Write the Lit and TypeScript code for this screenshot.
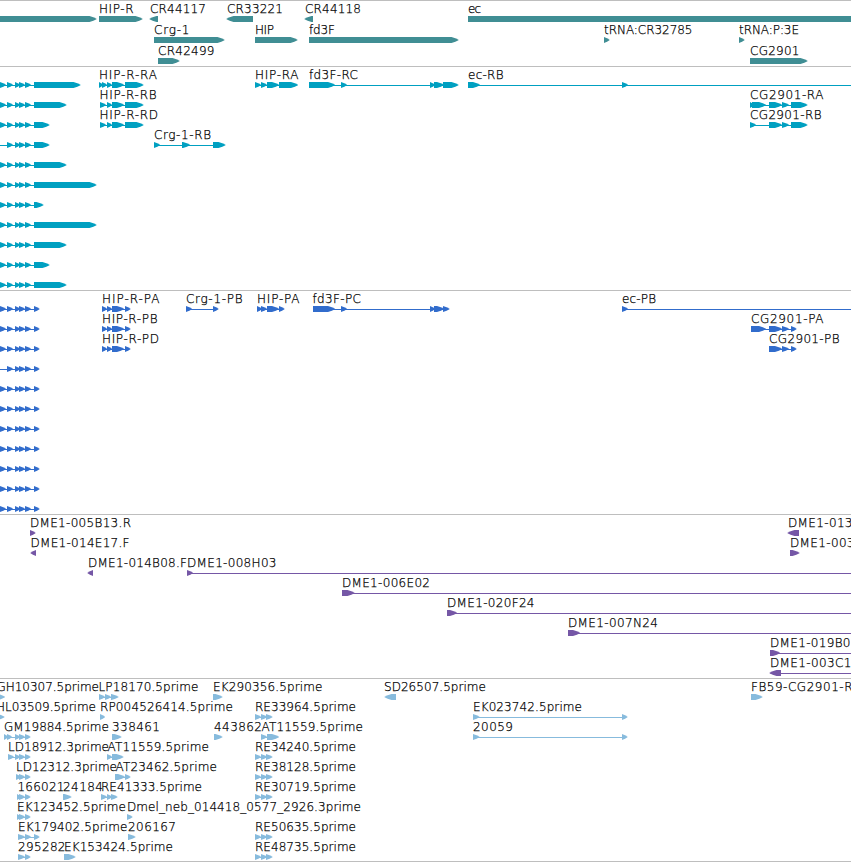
import { LitElement, html, svg, css } from "lit";
import { customElement, property } from "lit/decorators.js";

type Span = [number, number];

interface Feature {
  row: number;
  spans: Span[];
  label?: string;
  x: number;
  width: number;
  reverse: boolean;
}

interface Track {
  name: string;
  height: number;
  pitch: number;
  features: Feature[];
}

/** Far right coordinate for features that run past the visible region. */
const BEYOND = 870;

/** A labelled feature: row, label, label start, label end, spans. */
function f(row: number, label: string, x: number, end: number, spans: Span[], reverse = false): Feature {
  return { row, label, x, width: end - x, spans, reverse };
}

/** A feature whose label lies outside the visible region. */
function bare(row: number, spans: Span[]): Feature {
  return { row, spans, x: 0, width: 0, reverse: false };
}

const exons: Span[] = [[7, 13], [15, 20], [19, 25], [25, 31]];
const upstream = (row: number): Span[] => (row === 3 ? [[-12, -6]] : [[-6, -1], [0, 6]]);

const genes: Feature[] = [
  bare(0, [[-10, 96.5]]),
  f(0, "HIP-R", 99, 133.5, [[99, 142.5]]),
  f(0, "CR44117", 150, 206, [[149.5, 158]], true),
  f(0, "CR33221", 227, 283, [[226.5, 253]], true),
  f(0, "CR44118", 305, 361, [[304.5, 313]], true),
  f(0, "ec", 468, 481, [[468, BEYOND]]),
  f(1, "Crg-1", 154, 189.5, [[154, 224.5]]),
  f(1, "HIP", 255, 274, [[255, 297.5]]),
  f(1, "fd3F", 309, 335, [[309, 458.5]]),
  f(1, "tRNA:CR32785", 604, 692.5, [[604, 609.5]]),
  f(1, "tRNA:P:3E", 739, 799, [[739, 744.5]]),
  f(2, "CR42499", 158, 214.5, [[158, 179.5]]),
  f(2, "CG2901", 750, 799.5, [[750, 807.5]]),
];

const transcripts: Feature[] = [
  ...[80.5, 66.5, 49.5, 49.5, 66.5, 96.5, 43.5, 96.5, 66.5, 49.5, 66.5].map((end, row) =>
    bare(row, [...upstream(row), ...exons, [34, end] as Span])
  ),
  f(0, "HIP-R-RA", 99, 157, [[99, 103], [102, 107], [107, 112], [112, 124], [125, 143.5]]),
  f(1, "HIP-R-RB", 99.5, 156.5, [[100, 106], [107, 112], [112, 124], [125, 143.5]]),
  f(2, "HIP-R-RD", 99.5, 158, [[100, 106], [107, 112], [112, 124], [125, 143.5]]),
  f(3, "Crg-1-RB", 154, 211, [[154, 160], [182, 190], [213, 225.5]]),
  f(0, "HIP-RA", 255, 298.5, [[255, 261], [261, 267], [267, 279], [279, 298]]),
  f(0, "fd3F-RC", 309, 358, [[309, 335], [341, 347], [430, 435], [434, 444], [443, 458.5]]),
  f(0, "ec-RB", 468, 503.5, [[468, 480], [622, 628], [BEYOND, BEYOND + 6]]),
  f(1, "CG2901-RA", 750, 823.5, [[750, 754], [752, 766], [769, 782], [782, 789], [791, 807.5]]),
  f(2, "CG2901-RB", 750, 821.5, [[750, 756], [769, 782], [782, 789], [791, 807.5]]),
];

const proteins: Feature[] = [
  ...Array.from({ length: 11 }, (_, row) => bare(row, [...upstream(row), ...exons, [34, 39.5] as Span])),
  ...["HIP-R-PA", "HIP-R-PB", "HIP-R-PD"].map((name, row) =>
    f(row, name, 102, [159.5, 157.5, 159][row], [[102, 107], [107, 112], [112, 124], [125, 130.5]])
  ),
  f(0, "Crg-1-PB", 186, 242.5, [[186, 192], [213, 218.5]]),
  f(0, "HIP-PA", 257, 299.5, [[257, 262], [261, 267], [267, 279], [279, 284.5]]),
  f(0, "fd3F-PC", 312.5, 361, [[313, 335], [341, 347], [430, 435], [434, 444], [443, 449.5]]),
  f(0, "ec-PB", 622, 656, [[622, 628], [BEYOND, BEYOND + 6]]),
  f(1, "CG2901-PA", 751, 823.5, [[751, 766], [769, 782], [782, 789], [791, 796.5]]),
  f(2, "CG2901-PB", 769, 839.5, [[769, 782], [782, 789], [791, 796.5]]),
];

const clones: Feature[] = [
  f(0, "DME1-005B13.R", 30, 131, [[30, 35.5]]),
  f(1, "DME1-014E17.F", 30.5, 129.5, [[30.5, 36]], true),
  f(2, "DME1-014B08.F", 88, 187, [[87.5, 93]], true),
  f(2, "DME1-008H03", 187, 276.5, [[187, 193], [BEYOND, BEYOND + 6]]),
  f(3, "DME1-006E02", 342, 430, [[342, 354.5], [BEYOND, BEYOND + 6]]),
  f(4, "DME1-020F24", 447, 534.5, [[447, 457], [BEYOND, BEYOND + 6]]),
  f(5, "DME1-007N24", 568, 658, [[568, 580], [BEYOND, BEYOND + 6]]),
  f(0, "DME1-013", 788, 852.5, [[787.5, 799]], true),
  f(1, "DME1-003", 790, 854.5, [[790, 799.5]]),
  f(6, "DME1-019B0", 770, 850.5, [[770, 780], [BEYOND, BEYOND + 6]]),
  f(7, "DME1-003C1", 770, 851.5, [[769.5, 781], [BEYOND, BEYOND + 6]], true),
];

const hipReads: [number, string][] = [
  [1, "RE33964.5prime"],
  [3, "RE34240.5prime"],
  [4, "RE38128.5prime"],
  [5, "RE30719.5prime"],
  [7, "RE50635.5prime"],
  [8, "RE48735.5prime"],
];

const reads: Feature[] = [
  f(0, "GH10307.5prime", -3.5, 99, [[-2, 5]]),
  f(0, "LP18170.5prime", 98.5, 198.5, [[99, 105], [105, 111], [111, 118.5]]),
  f(0, "EK290356.5prime", 213, 322.5, [[213, 222.5]]),
  f(0, "SD26507.5prime", 384, 486, [[384.5, 396]], true),
  f(0, "FB59-CG2901-R", 751, 852.5, [[751, 762.5]]),
  f(1, "HL03509.5prime", -4, 96, [[-2, 4.5]]),
  f(1, "RP004526414.5prime", 100, 233, [[100, 105]]),
  f(1, "EK023742.5prime", 473, 582, [[473, 479.5], [622, 627.5]]),
  f(2, "GM19884.5prime", 4, 109, [[4, 8], [7, 12], [15, 20], [19, 25], [25, 30.5]]),
  f(2, "338461", 112, 160, [[112, 121.5]]),
  f(2, "443862", 214, 262, [[214, 222.5]]),
  f(2, "AT11559.5prime", 261.5, 363, [[261, 267], [267, 279]]),
  f(2, "20059", 473, 513, [[473, 479.5], [622, 627.5]]),
  f(3, "LD18912.3prime", 8, 109, [[8, 14], [15, 20], [19, 25], [25, 30.5]]),
  f(3, "AT11559.5prime", 107.5, 209, [[107, 112], [112, 123.5]]),
  f(4, "LD12312.3prime", 16, 117, [[16, 21], [19, 25], [25, 30.5]]),
  f(4, "AT23462.5prime", 115.5, 217, [[115, 125], [125, 130.5]]),
  f(5, "166021", 17.5, 64.5, [[17, 21], [19, 25], [25, 30.5]]),
  f(5, "24184", 63, 103, [[63, 71.5]]),
  f(5, "RE41333.5prime", 101, 202, [[101, 107], [107, 112], [111, 117.5]]),
  f(6, "EK123452.5prime", 17, 126, [[17, 21], [19, 25], [25, 30.5]]),
  f(6, "Dmel_neb_014418_0577_2926.3prime", 127, 361, [[127, 132.5]]),
  f(7, "EK179402.5prime", 18, 127.5, [[18, 25], [25, 31], [34, 39.5]]),
  f(7, "206167", 128, 176, [[128, 135.5]]),
  f(8, "295282", 18, 65.5, [[18, 25], [25, 30.5]]),
  f(8, "EK153424.5prime", 64, 173, [[64, 75.5]]),
  ...hipReads.map(([row, name]) => f(row, name, 255, 356, [[255, 261], [261, 267], [266, 272.5]])),
];

const tracks: Track[] = [
  { name: "gene", height: 65, pitch: 21, features: genes },
  { name: "transcript", height: 223, pitch: 20, features: transcripts },
  { name: "protein", height: 223, pitch: 20, features: proteins },
  { name: "clone", height: 163, pitch: 20, features: clones },
  { name: "read", height: 182, pitch: 20, features: reads },
];

@customElement("genome-track")
export class GenomeTrack extends LitElement {
  @property({ attribute: false }) track!: Track;

  static styles = css`
    :host { display: block; border-top: 1px solid #bebebe; }
    .canvas { display: block; width: 100%; overflow: hidden; }
    .label { font: 200 12px "DejaVu Sans", Verdana, sans-serif; fill: #000; stroke: #000; stroke-width: 0.25px; }
    .gene { color: #408e94; }
    .transcript { color: #00a0c1; }
    .protein { color: #316ccc; }
    .clone { color: #7557a6; }
    .read { color: #87bbdd; }
    .shape { fill: currentColor; }
  `;

  private block([a, b]: Span, y: number, reverse: boolean) {
    const head = Math.min(b - a, 7);
    const tip = reverse ? a : b;
    const tail = reverse ? b : a;
    const dir = reverse ? 1 : -1;
    const neck = tip + dir * head;
    const mid = tip + dir * head * 0.45;
    const points = [
      [tail, y], [neck, y], [mid, y + 1.2], [tip, y + 2.7],
      [tip, y + 3.3], [mid, y + 4.8], [neck, y + 6], [tail, y + 6],
    ].map((p) => p.join(",")).join(" ");
    return svg`<polygon class="shape" points=${points}></polygon>`;
  }

  private feature(item: Feature) {
    const y = 15 + item.row * this.track.pitch;
    const first = item.spans[0][0];
    const last = item.spans[item.spans.length - 1][0];
    return svg`
      ${last > first
        ? svg`<rect class="shape" x=${first + 1} y=${y + 3} width=${last - first} height="1"></rect>`
        : null}
      ${item.spans.map((s) => this.block(s, y, item.reverse))}
      ${item.label
        ? svg`<text class="label" x=${item.x} y=${y - 3} textLength=${item.width}>${item.label}</text>`
        : null}`;
  }

  render() {
    return html`<svg class="canvas ${this.track.name}" height=${this.track.height}>
      ${this.track.features.map((item) => this.feature(item))}
    </svg>`;
  }
}

@customElement("app-root")
export class AppRoot extends LitElement {
  static styles = css`
    :host { display: block; background: #fff; }
    .browser { display: flex; flex-direction: column; border-bottom: 1px solid #bebebe; }
  `;

  render() {
    return html`<main class="browser">
      ${tracks.map((track) => html`<genome-track .track=${track}></genome-track>`)}
    </main>`;
  }
}
